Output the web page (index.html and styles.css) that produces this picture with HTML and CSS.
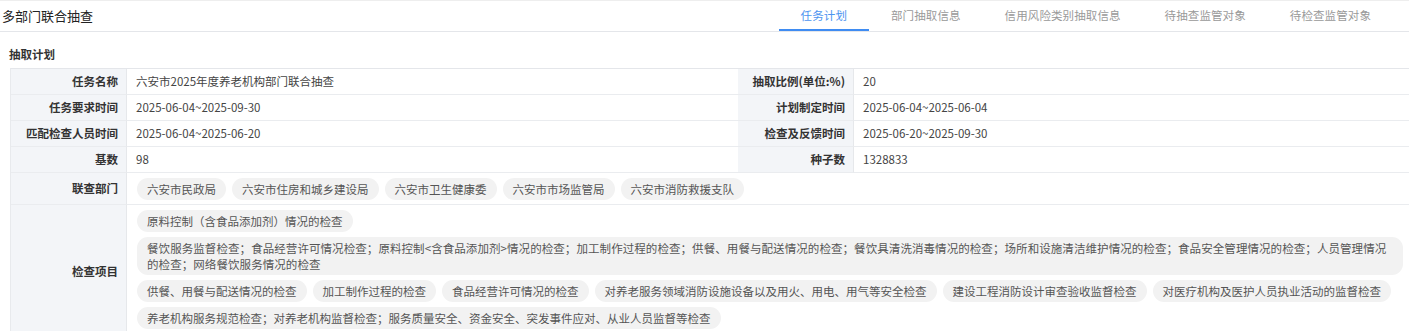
FILE: index.html
```html
<!DOCTYPE html>
<html lang="zh-CN">
<head>
<meta charset="UTF-8" />
<meta name="viewport" content="width=device-width, initial-scale=1" />
<title>多部门联合抽查</title>
<link rel="stylesheet" href="styles.css">
</head>
<body>

<div class="header">
  <div class="page-title">多部门联合抽查</div>
  <div class="tabs">
    <div class="tab active">任务计划</div>
    <div class="tab">部门抽取信息</div>
    <div class="tab">信用风险类别抽取信息</div>
    <div class="tab">待抽查监管对象</div>
    <div class="tab">待检查监管对象</div>
  </div>
</div>

<div class="section-title">抽取计划</div>

<div class="plan">
  <div class="label">任务名称</div>
  <div class="value">六安市2025年度养老机构部门联合抽查</div>
  <div class="label">抽取比例(单位:%)</div>
  <div class="value">20</div>

  <div class="label">任务要求时间</div>
  <div class="value">2025-06-04~2025-09-30</div>
  <div class="label">计划制定时间</div>
  <div class="value">2025-06-04~2025-06-04</div>

  <div class="label">匹配检查人员时间</div>
  <div class="value">2025-06-04~2025-06-20</div>
  <div class="label">检查及反馈时间</div>
  <div class="value">2025-06-20~2025-09-30</div>

  <div class="label">基数</div>
  <div class="value">98</div>
  <div class="label">种子数</div>
  <div class="value">1328833</div>

  <div class="label">联查部门</div>
  <div class="value wide tags">
    <span class="tag">六安市民政局</span>
    <span class="tag">六安市住房和城乡建设局</span>
    <span class="tag">六安市卫生健康委</span>
    <span class="tag">六安市市场监管局</span>
    <span class="tag">六安市消防救援支队</span>
  </div>

  <div class="label">检查项目</div>
  <div class="value wide tags items">
    <span class="tag">原料控制（含食品添加剂）情况的检查</span>
    <span class="tag long">餐饮服务监督检查；食品经营许可情况检查；原料控制&lt;含食品添加剂&gt;情况的检查；加工制作过程的检查；供餐、用餐与配送情况的检查；餐饮具清洗消毒情况的检查；场所和设施清洁维护情况的检查；食品安全管理情况的检查；人员管理情况的检查；网络餐饮服务情况的检查</span>
    <span class="tag">供餐、用餐与配送情况的检查</span>
    <span class="tag">加工制作过程的检查</span>
    <span class="tag">食品经营许可情况的检查</span>
    <span class="tag">对养老服务领域消防设施设备以及用火、用电、用气等安全检查</span>
    <span class="tag">建设工程消防设计审查验收监督检查</span>
    <span class="tag">对医疗机构及医护人员执业活动的监督检查</span>
    <span class="tag">养老机构服务规范检查；对养老机构监督检查；服务质量安全、资金安全、突发事件应对、从业人员监督等检查</span>
  </div>
</div>

</body>
</html>
```

FILE: styles.css
```css
* { box-sizing: border-box; }
html, body {
  margin: 0; padding: 0;
  background: #fff;
  color: #333;
  font-family: "Noto Sans CJK SC", "Liberation Sans", sans-serif;
  font-size: 11.5px;
  overflow: hidden;
}

.header {
  display: flex;
  align-items: center;
  justify-content: space-between;
  height: 32px;
  border-top: 1px solid #eeeeee;
  border-bottom: 1px solid #e4e6ea;
  padding: 0 16px 0 2px;
}

.page-title {
  font-size: 13px;
  color: #222;
  line-height: 30px;
}

.tabs {
  display: flex;
  align-self: stretch;
}

.tab {
  padding: 0 22px;
  line-height: 28px;
  color: #999;
  letter-spacing: 0.1px;
  border-bottom: 2px solid transparent;
}

.tab.active {
  color: #4d94f0;
  border-bottom-color: #3f8cf2;
}

.section-title {
  padding: 13px 9px 0;
  line-height: 18px;
  margin-bottom: 5px;
  font-size: 11.5px;
  font-weight: bold;
  color: #333;
}

.plan {
  display: grid;
  grid-template-columns: 116px 611px 116px 1fr;
  margin-left: 10px;
  border-top: 1px solid #e4e6ea;
  border-left: 1px solid #e8eaed;
}

.label,
.value {
  line-height: 25px;
  border-bottom: 1px solid #eaecef;
}

.label {
  background: #f3f5f8;
  border-right: 1px solid #e6e8eb;
  text-align: right;
  font-weight: bold;
  color: #333;
  padding: 0 8px;
  display: flex;
  align-items: center;
  justify-content: flex-end;
}

.value {
  padding: 0 9px;
  color: #444;
}

.value.wide {
  grid-column: span 3;
}

.tags {
  display: flex;
  flex-wrap: wrap;
  align-items: flex-start;
  gap: 5px 6px;
  padding: 5px 6px 4px 10px;
}

.items {
  padding-bottom: 9px;
}

.tag {
  background: #f2f2f2;
  color: #555;
  line-height: 16px;
  padding: 3px 10px;
  border-radius: 11px;
}

.tag.long {
  letter-spacing: 0.07px;
  padding-right: 12px;
}
```
